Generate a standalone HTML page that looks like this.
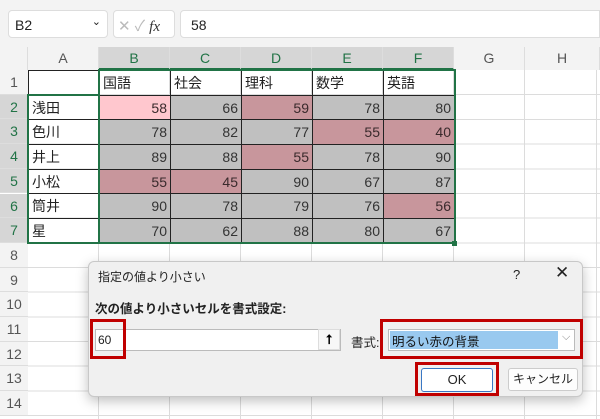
<!DOCTYPE html>
<html><head><meta charset="utf-8"><style>
*{box-sizing:border-box;margin:0;padding:0}
body{width:600px;height:419px;overflow:hidden;background:#fff;font-family:"Liberation Sans","Noto Sans CJK JP",sans-serif;position:relative}
.a{position:absolute}
.top{left:0;top:0;width:600px;height:47px;background:#f3f3f3}
.nb{left:8px;top:10px;width:100px;height:28px;background:#fff;border:1px solid #ddd;border-radius:4px;font-size:14px;padding:6px 0 0 6px;color:#222}
.fb{left:113px;top:10px;width:62px;height:28px;background:#fff;border:1px solid #ddd;border-radius:4px;color:#bbb;font-size:15px;padding:4px 0 0 4px}
.fx{left:180px;top:10px;width:420px;height:28px;background:#fff;border:1px solid #ddd;border-radius:4px 0 0 4px;font-size:14px;padding:6px 0 0 10px;color:#222}
.ch{top:47px;height:23px;font-size:14px;color:#555;text-align:center;line-height:23px;border-right:1px solid #ddd;background:#f3f3f3}
.ch.s{background:#d6d6d6;color:#217346;border-bottom:2px solid #217346}
.rh{left:0;width:28px;height:24.7px;font-size:14px;color:#555;text-align:center;line-height:25px;background:#f3f3f3;border-bottom:1px solid #ddd}
.rh.s{color:#217346;background:#d6d6d6}
.c{height:24.7px;font-size:14px;line-height:24px;padding:0 3px;border-right:1px solid #222;border-bottom:1px solid #222;color:#222}
.g{background:#c0c0c0;text-align:right;color:#333}
.r{background:#c8969c;text-align:right;color:#3a2a2c}
.p{background:#ffc7ce;text-align:right;color:#3a2a2c}
</style></head><body>
<div class="a top"></div>
<div class="a nb">B2<span style="position:absolute;right:6px;top:4px;font-size:11px">⌄</span></div>
<div class="a" style="top:14px;font-size:14px;color:#444;left:110px;width:6px">⋮</div>
<div class="a fb">✕ ✓ <i style="color:#333;font-family:'Liberation Serif',serif">fx</i></div>
<div class="a fx">58</div>
<div class="a ch" style="left:0;width:28px"></div>
<div class="a ch" style="left:28px;width:71px">A</div>
<div class="a ch s" style="left:99px;width:71px">B</div>
<div class="a ch s" style="left:170px;width:71px">C</div>
<div class="a ch s" style="left:241px;width:71px">D</div>
<div class="a ch s" style="left:312px;width:71px">E</div>
<div class="a ch s" style="left:383px;width:71px">F</div>
<div class="a ch" style="left:454px;width:71px">G</div>
<div class="a ch" style="left:525px;width:75px">H</div>
<svg class="a" style="left:0;top:70px" width="600" height="349">
<g stroke="#dcdcdc" stroke-width="1">
<line x1="98.5" y1="0" x2="98.5" y2="349"/><line x1="169.5" y1="0" x2="169.5" y2="349"/><line x1="240.5" y1="0" x2="240.5" y2="349"/><line x1="311.5" y1="0" x2="311.5" y2="349"/><line x1="382.5" y1="0" x2="382.5" y2="349"/><line x1="453.5" y1="0" x2="453.5" y2="349"/><line x1="524.5" y1="0" x2="524.5" y2="349"/><line x1="596.5" y1="0" x2="596.5" y2="349"/>
<line x1="28" y1="24.5" x2="600" y2="24.5"/><line x1="28" y1="49.5" x2="600" y2="49.5"/><line x1="28" y1="74" x2="600" y2="74"/><line x1="28" y1="99" x2="600" y2="99"/><line x1="28" y1="123.5" x2="600" y2="123.5"/><line x1="28" y1="148" x2="600" y2="148"/><line x1="28" y1="173" x2="600" y2="173"/><line x1="28" y1="197.5" x2="600" y2="197.5"/><line x1="28" y1="222" x2="600" y2="222"/><line x1="28" y1="247" x2="600" y2="247"/><line x1="28" y1="271.5" x2="600" y2="271.5"/><line x1="28" y1="296" x2="600" y2="296"/><line x1="28" y1="321" x2="600" y2="321"/><line x1="28" y1="345.5" x2="600" y2="345.5"/>
</g></svg>
<div class="a rh" style="top:70px">1</div>
<div class="a rh s" style="top:94.7px">2</div>
<div class="a rh s" style="top:119.4px">3</div>
<div class="a rh s" style="top:144.1px">4</div>
<div class="a rh s" style="top:168.8px">5</div>
<div class="a rh s" style="top:193.5px">6</div>
<div class="a rh s" style="top:218.2px">7</div>
<div class="a rh" style="top:242.9px">8</div>
<div class="a rh" style="top:267.6px">9</div>
<div class="a rh" style="top:292.3px">10</div>
<div class="a rh" style="top:317px">11</div>
<div class="a rh" style="top:341.7px">12</div>
<div class="a rh" style="top:366.4px">13</div>
<div class="a rh" style="top:391.1px">14</div>
<div class="a" style="left:28px;top:70px;display:grid;grid-template-columns:71px 71px 71px 71px 71px 71px;grid-auto-rows:24.7px;border-left:1px solid #222;border-top:1px solid #222;width:427px">
<div class="c"></div><div class="c">国語</div><div class="c">社会</div><div class="c">理科</div><div class="c">数学</div><div class="c">英語</div>
<div class="c">浅田</div><div class="c p">58</div><div class="c g">66</div><div class="c r">59</div><div class="c g">78</div><div class="c g">80</div>
<div class="c">色川</div><div class="c g">78</div><div class="c g">82</div><div class="c g">77</div><div class="c r">55</div><div class="c r">40</div>
<div class="c">井上</div><div class="c g">89</div><div class="c g">88</div><div class="c r">55</div><div class="c g">78</div><div class="c g">90</div>
<div class="c">小松</div><div class="c r">55</div><div class="c r">45</div><div class="c g">90</div><div class="c g">67</div><div class="c g">87</div>
<div class="c">筒井</div><div class="c g">90</div><div class="c g">78</div><div class="c g">79</div><div class="c g">76</div><div class="c r">56</div>
<div class="c">星</div><div class="c g">70</div><div class="c g">62</div><div class="c g">88</div><div class="c g">80</div><div class="c g">67</div>
</div>
<div class="a" style="left:98px;top:69px;width:358px;height:175px;border:2px solid #217346"></div>
<div class="a" style="left:27px;top:94px;width:73px;height:150px;border:2px solid #217346;border-right:none"></div>
<div class="a" style="left:452px;top:241px;width:5px;height:5px;background:#217346"></div>
<div class="a" style="left:88px;top:261px;width:495px;height:136px;background:#f0f0f0;border:1px solid #c8c8c8;border-radius:6px;box-shadow:0 4px 12px rgba(0,0,0,.25)">
<div class="a" style="left:9px;top:6px;font-size:12px;color:#222">指定の値より小さい</div>
<div class="a" style="left:424px;top:5px;font-size:13px;color:#222">?</div>
<div class="a" style="left:466px;top:1px;font-size:17px;color:#222">✕</div>
<div class="a" style="left:6px;top:36px;font-size:12.5px;font-weight:bold;color:#222">次の値より小さいセルを書式設定:</div>
<div class="a" style="left:6px;top:67px;width:246px;height:22px;background:#fff;border:1px solid #bbb"></div>
<div class="a" style="left:9px;top:71px;font-size:12px;color:#222">60</div>
<div class="a" style="left:229px;top:67px;width:22px;height:21px;background:#f7f7f7;border:1px solid #ddd;text-align:center;font-size:13px;font-weight:bold;line-height:20px">⭡</div>
<div class="a" style="left:262px;top:70px;font-size:12.5px;color:#222">書式:</div>
<div class="a" style="left:299px;top:67px;width:187px;height:22px;background:#fff;border:1px solid #bbb"></div>
<div class="a" style="left:301px;top:69px;width:168px;height:18px;background:#99c9ef;font-size:12.5px;color:#111;padding-left:2px">明るい赤の背景</div>
<div class="a" style="left:473px;top:69px;font-size:11px;color:#888">⌵</div>
<div class="a" style="left:1px;top:57px;width:36px;height:40px;border:3px solid #c00000"></div>
<div class="a" style="left:291px;top:57px;width:203px;height:40px;border:3px solid #c00000"></div>
<div class="a" style="left:332px;top:106px;width:72px;height:24px;background:#fff;border:1px solid #3a78c4;border-radius:3px;text-align:center;font-size:13px;line-height:22px;color:#222">OK</div>
<div class="a" style="left:326px;top:100px;width:84px;height:34px;border:3px solid #c00000"></div>
<div class="a" style="left:419px;top:106px;width:70px;height:23px;background:#fdfdfd;border:1px solid #ccc;border-radius:3px;text-align:center;font-size:12px;line-height:21px;color:#222">キャンセル</div>
</div>
</body></html>
